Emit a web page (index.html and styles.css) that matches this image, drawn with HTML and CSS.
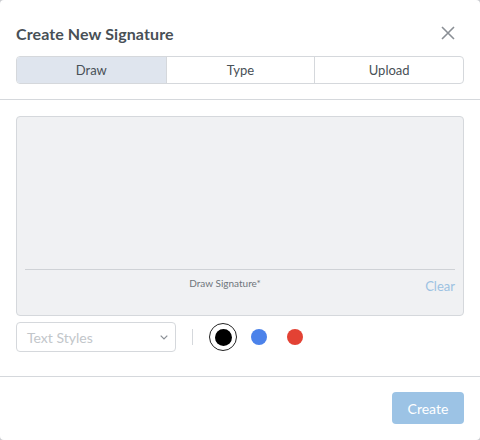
FILE: index.html
```html
<!DOCTYPE html>
<html>
<head>
<meta charset="utf-8">
<link rel="stylesheet" href="styles.css">
</head>
<body>
<div class="modal">
  <div class="header">
    <div class="head-row">
      <h1 class="title">Create New Signature</h1>
      <button class="close" aria-label="Close">
        <svg width="14" height="14" viewBox="0 0 14 14"><path d="M1 1L13 13M13 1L1 13" stroke="#8a8f95" stroke-width="1.6" fill="none"/></svg>
      </button>
    </div>
    <div class="tabs">
      <div class="tab active">Draw</div>
      <div class="tab">Type</div>
      <div class="tab">Upload</div>
    </div>
  </div>
  <div class="body">
    <div class="canvas">
      <div class="canvas-space"></div>
      <div class="sign-line"></div>
      <div class="canvas-foot">
        <span class="hint">Draw Signature*</span>
        <span class="clear">Clear</span>
      </div>
    </div>
    <div class="tools">
      <div class="select">
        <span class="placeholder">Text Styles</span>
        <svg width="8" height="5" viewBox="0 0 8 5"><path d="M0.7 0.7L4 4L7.3 0.7" stroke="#8a8f95" stroke-width="1.2" fill="none"/></svg>
      </div>
      <div class="vsep"></div>
      <div class="swatches">
        <span class="swatch selected"><span class="dot black"></span></span>
        <span class="swatch"><span class="dot blue"></span></span>
        <span class="swatch"><span class="dot red"></span></span>
      </div>
    </div>
  </div>
  <div class="footer">
    <button class="create">Create</button>
  </div>
</div>
</body>
</html>
```
FILE: styles.css
```css
* { box-sizing: border-box; }
html, body { margin: 0; padding: 0; }
body {
  width: 480px;
  height: 440px;
  background: #c9cbcf;
  font-family: Lato, "Noto Sans", sans-serif;
}
.modal {
  width: 480px;
  height: 440px;
  background: #fff;
  border-radius: 4px;
  display: flex;
  flex-direction: column;
}
.header {
  padding: 20px 16px 15px 16px;
  border-bottom: 1px solid #d5d8dc;
}
.head-row {
  display: flex;
  justify-content: space-between;
  align-items: center;
  height: 26px;
  margin-bottom: 10px;
}
.title {
  margin: 0;
  font-size: 16px;
  font-weight: 700;
  color: #485056;
  letter-spacing: 0.1px;
}
.close {
  border: 0;
  background: none;
  padding: 0;
  width: 14px;
  height: 14px;
  margin-right: 9px;
  display: flex;
}
.tabs {
  display: grid;
  grid-template-columns: 1fr 1fr 1fr;
  height: 28px;
  border: 1px solid #d5d8dc;
  border-radius: 4px;
  overflow: hidden;
}
.tab {
  display: flex;
  align-items: center;
  justify-content: center;
  font-size: 13px;
  color: #485056;
  border-left: 1px solid #d5d8dc;
}
.tab:first-child { border-left: 0; }
.tab.active { background: #dfe5ee; }
.body {
  padding: 16px 16px 0 16px;
  flex: 1;
  border-bottom: 1px solid #d5d8dc;
}
.canvas {
  height: 200px;
  background: #f0f1f3;
  border: 1px solid #d5d8dc;
  border-radius: 4px;
  display: flex;
  flex-direction: column;
  padding: 0 8px;
}
.canvas-space { height: 152px; }
.sign-line { height: 1px; background: #cfd2d6; }
.canvas-foot {
  display: flex;
  align-items: flex-start;
}
.hint {
  flex: 1;
  text-align: center;
  font-size: 10px;
  color: #6f757b;
  padding-top: 7px;
}
.clear {
  padding-top: 8px;
  font-size: 13px;
  color: #9cc2e2;
}
.tools {
  display: flex;
  align-items: center;
  margin-top: 6px;
  height: 30px;
}
.select {
  width: 160px;
  height: 30px;
  border: 1px solid #d5d8dc;
  border-radius: 4px;
  display: flex;
  align-items: center;
  justify-content: space-between;
  padding: 0 7px 0 10px;
}
.placeholder {
  font-size: 14px;
  color: #c2c6ca;
}
.vsep {
  width: 1px;
  height: 16px;
  background: #d5d8dc;
  margin: 0 16px;
}
.swatches {
  display: flex;
  align-items: center;
  gap: 8px;
}
.swatch {
  width: 28px;
  height: 28px;
  border-radius: 50%;
  display: flex;
  align-items: center;
  justify-content: center;
}
.swatch.selected { border: 1px solid #222; }
.dot {
  width: 16px;
  height: 16px;
  border-radius: 50%;
}
.dot.black { background: #000; width: 17px; height: 17px; }
.dot.blue { background: #4b82ea; }
.dot.red { background: #e34234; }
.footer {
  height: 63px;
  display: flex;
  justify-content: flex-end;
  align-items: flex-start;
  padding: 15px 16px 0 0;
}
.create {
  width: 72px;
  height: 32px;
  border: 0;
  border-radius: 4px;
  background: #9cc3e5;
  color: #fff;
  font-family: Lato, sans-serif;
  font-size: 14px;
}
```
